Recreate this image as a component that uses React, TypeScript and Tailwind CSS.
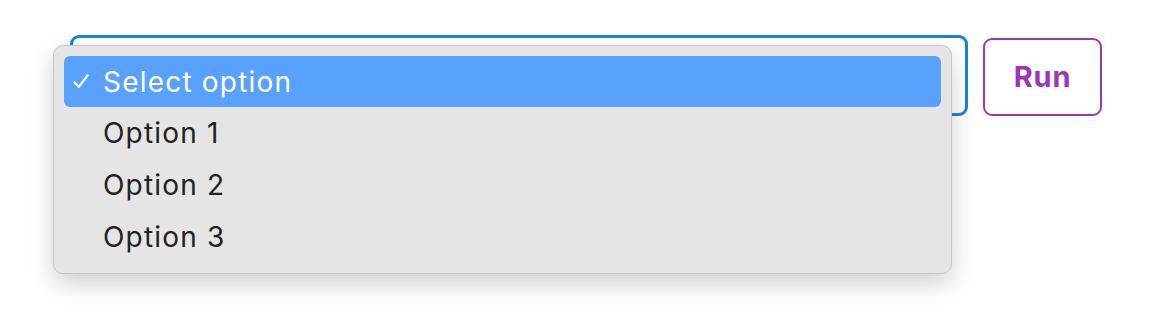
import React, { useState } from 'react';

const options = ['Select option', 'Option 1', 'Option 2', 'Option 3'];

const Check: React.FC = () => (
  <svg width="16" height="15" viewBox="0 0 16 15" fill="none">
    <path d="M1.5 8.2 L5.8 13 L14.5 1.5" stroke="currentColor" strokeWidth="2.2" strokeLinecap="round" strokeLinejoin="round" />
  </svg>
);

const App: React.FC = () => {
  const [selected] = useState(0);

  return (
    <div
      className="min-h-[328px] w-[1170px] bg-white pl-[70px] pt-[35px]"
      style={{ fontFamily: 'Inter, "Noto Sans", sans-serif' }}
    >
      <div className="flex items-end gap-[15px]">
        <div className="relative h-[81px] w-[898px] rounded-[9px] border-[3px] border-[#1784da] bg-white">
          {/* open native-style menu */}
          <div className="absolute left-[-20px] top-[7px] z-10 w-[899px] rounded-[10px] border border-[#c6c6c6] bg-[#e5e5e5] px-[10px] pb-[10px] pt-[10px] shadow-[0_10px_24px_rgba(0,0,0,0.18)]">
            {options.map((opt, i) => (
              <div
                key={opt}
                className={
                  i === selected
                    ? 'flex h-[51px] items-center rounded-[6px] bg-[#58a1fd] text-white'
                    : 'flex h-[52px] items-center text-[#222222]'
                }
              >
                <span className="flex w-[39px] justify-start pl-[9px]">{i === selected ? <Check /> : null}</span>
                <span className="text-[28px] leading-none tracking-[1.2px]">{opt}</span>
              </div>
            ))}
          </div>
        </div>
        <button
          type="button"
          className="h-[78px] w-[119px] rounded-[9px] border-2 border-[#9c36b5] bg-white text-[29px] font-bold tracking-[0.8px] text-[#9c36b5]"
        >
          Run
        </button>
      </div>
    </div>
  );
};

export default App;
